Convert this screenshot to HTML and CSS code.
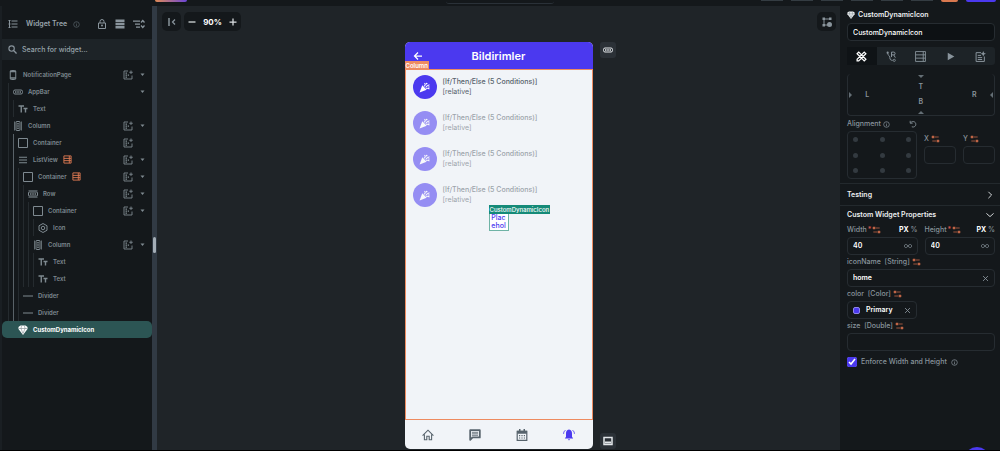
FILE: index.html
```
<!DOCTYPE html>
<html lang="en">
<head>
    <meta charset="UTF-8">
    <title>Widget Tree</title>
    <link rel="stylesheet" href="styles.css">
</head>
<body>
<svg class="sprite" aria-hidden="true">
    <symbol id="tree" viewBox="0 0 20 20"><path d="M7 4h12M7 10h12M7 16h12M3 2v16M1 4l2-2 2 2M1 10h4M1 17h4" fill="none" stroke="currentColor" stroke-width="2"/></symbol>
    <symbol id="info" viewBox="0 0 20 20"><circle cx="10" cy="10" r="8" fill="none" stroke="currentColor" stroke-width="2"/><path d="M10 9v6M10 5v2" stroke="currentColor" stroke-width="2"/></symbol>
    <symbol id="lock" viewBox="0 0 20 20"><path d="M3 8h14v11H3zM6 8V5a4 4 0 0 1 8 0v3" fill="none" stroke="currentColor" stroke-width="2"/><circle cx="10" cy="13" r="2" fill="currentColor"/></symbol>
    <symbol id="rows" viewBox="0 0 20 20"><path d="M1 1h18v5H1zM1 7.500h18v5H1zM1 14h18v5H1z" fill="currentColor"/></symbol>
    <symbol id="collapse" viewBox="0 0 24 20"><path d="M0 4h14M4 10h10M6 16h8" stroke="currentColor" stroke-width="2.500"/><path d="M16 7l3.500-4L23 7M16 13l3.500 4 3.500-4" fill="none" stroke="currentColor" stroke-width="2.500"/></symbol>
    <symbol id="search" viewBox="0 0 20 20"><path d="M13 13l6 6" stroke="currentColor" stroke-width="3"/><circle cx="8" cy="8" r="6" fill="none" stroke="currentColor" stroke-width="2.500"/></symbol>
    <symbol id="phone" viewBox="0 0 20 20"><rect x="4.500" y="1" width="11" height="18" rx="2" fill="none" stroke="currentColor" stroke-width="2"/><path d="M4 3h12M4 16h12" stroke="currentColor" stroke-width="3"/></symbol>
    <symbol id="bar" viewBox="0 0 20 20"><rect x="1" y="6" width="18" height="8" rx="3" fill="none" stroke="currentColor" stroke-width="2"/><path d="M4 8.500h3v3H4zM8.500 8.500h3v3h-3zM13 8.500h3v3h-3z" fill="currentColor"/></symbol>
    <symbol id="text" viewBox="0 0 20 20"><path d="M1 4h11M6.500 4v13M11 9h8M15 9v8" fill="none" stroke="currentColor" stroke-width="2.800"/></symbol>
    <symbol id="column" viewBox="0 0 20 20"><path d="M3 1v18M17 1v18" stroke="currentColor" stroke-width="1.500"/><rect x="6" y="1" width="8" height="18" rx="1" fill="none" stroke="currentColor" stroke-width="2"/><path d="M8.500 4h3v3h-3zM8.500 8.500h3v3h-3zM8.500 13h3v3h-3z" fill="currentColor"/></symbol>
    <symbol id="row" viewBox="0 0 20 20"><path d="M1 3.500h18M1 16.500h18" stroke="currentColor" stroke-width="1.500"/><rect x="1" y="6" width="18" height="8" rx="1" fill="none" stroke="currentColor" stroke-width="2"/><path d="M4 8.500h3v3H4zM8.500 8.500h3v3h-3zM13 8.500h3v3h-3z" fill="currentColor"/></symbol>
    <symbol id="box" viewBox="0 0 20 20"><path d="M1 1h18v18H1z" fill="none" stroke="currentColor" stroke-width="2"/></symbol>
    <symbol id="list" viewBox="0 0 20 20"><path d="M2 4.500h16M2 10h16M2 15.500h16" stroke="currentColor" stroke-width="2.200"/></symbol>
    <symbol id="hex" viewBox="0 0 20 20"><path d="M10 1l8 4.500v9L10 19l-8-4.500v-9z" fill="none" stroke="currentColor" stroke-width="2"/><circle cx="10" cy="10" r="3.500" fill="none" stroke="currentColor" stroke-width="2"/></symbol>
    <symbol id="divider" viewBox="0 0 20 20"><path d="M0 10h20" stroke="currentColor" stroke-width="2"/></symbol>
    <symbol id="gem" viewBox="0 0 20 20"><path d="M5 1h10l4 3v4l-9 12L1 8V4z" fill="currentColor"/><path d="M2 7h16M7 2L6 7l4 10 4-10-1-5" fill="none" stroke="#66757a"/></symbol>
    <symbol id="query" viewBox="0 0 20 20"><path d="M2 2h16v16H2zM2 7.500h16M2 12.500h16M14 2v16" fill="none" stroke="currentColor" stroke-width="2"/></symbol>
    <symbol id="slot" viewBox="0 0 20 20"><path d="M10 2H2v16h16v-7" fill="none" stroke="currentColor" stroke-width="1.800"/><path d="M16 1v7M12.500 4.500h7" stroke="currentColor" stroke-width="1.800"/><path d="M5 5h3v2.500H5zM5 9h3v2.500H5zM5 13h3v2.500H5zM9.500 9H12v2.500H9.500z" fill="currentColor"/></symbol>
    <symbol id="caret" viewBox="0 0 10 10"><path d="M1 3h8L5 8z" fill="currentColor"/></symbol>
    <symbol id="hide" viewBox="0 0 20 20"><path d="M4 2v16" stroke="currentColor" stroke-width="3"/><path d="M16 5l-5 5 5 5" fill="none" stroke="currentColor" stroke-width="2.500"/></symbol>
    <symbol id="minus" viewBox="0 0 20 20"><path d="M3 10h14" stroke="currentColor" stroke-width="2.500"/></symbol>
    <symbol id="plus" viewBox="0 0 20 20"><path d="M3 10h14M10 3v14" stroke="currentColor" stroke-width="2.500"/></symbol>
    <symbol id="nodes" viewBox="0 0 20 20"><path d="M4 4h12M4 4v12h10" fill="none" stroke="currentColor" stroke-width="2"/><path d="M1 1h5v5H1zM14 1h5v5h-5zM1 14h5v5H1z" fill="currentColor"/><circle cx="15" cy="15" r="5" fill="currentColor"/></symbol>
    <symbol id="dock" viewBox="0 0 20 20"><path d="M2 3h16v14H2z" fill="none" stroke="currentColor" stroke-width="3"/><path d="M4 11h12v4H4z" fill="currentColor"/></symbol>
    <symbol id="back" viewBox="0 0 20 20"><path d="M18 10H3M10 3l-7 7 7 7" fill="none" stroke="currentColor" stroke-width="2.500"/></symbol>
    <symbol id="party" viewBox="0 0 20 20"><path d="M1 19L6 6l8 8z" fill="currentColor"/><path d="M9 8c3-2 3-4 1-6M12 10c2-3 4-4 7-5M13 12c2-1 4-1 6 1" fill="none" stroke="currentColor" stroke-width="2"/><circle cx="14" cy="3" r="1.500" fill="currentColor"/><circle cx="18" cy="9" r="1.300" fill="currentColor"/></symbol>
    <symbol id="home" viewBox="0 0 20 20"><path d="M1 11l9-9 9 9M4 9v9h4v-6h4v6h4V9" fill="none" stroke="currentColor" stroke-width="1.800"/></symbol>
    <symbol id="chat" viewBox="0 0 20 20"><path d="M2 18V2h16v12H6z" fill="none" stroke="currentColor" stroke-width="3" stroke-linejoin="round"/><path d="M5 5.500h10M5 8h10M5 10.500h10" stroke="currentColor" stroke-width="1.400"/></symbol>
    <symbol id="calendar" viewBox="0 0 20 20"><path d="M2 4h16v15H2z" fill="none" stroke="currentColor" stroke-width="2"/><path d="M2 3h16v5H2zM5 0h2.500v4H5zM12.500 0H15v4h-2.500zM5 10h2v2H5zM9 10h2v2H9zM13 10h2v2h-2zM5 14h2v2H5zM9 14h2v2H9zM13 14h2v2h-2z" fill="currentColor"/></symbol>
    <symbol id="bell" viewBox="0 0 20 20"><path d="M10 1c4 1 5 3 5 7v5l2 3H3l2-3V8c0-4 1-6 5-7zM8 17h4l-2 2z" fill="currentColor"/><path d="M4 2C2 4 1 5 1 8M16 2c2 2 3 3 3 6" fill="none" stroke="currentColor" stroke-width="1.500"/></symbol>
    <symbol id="design" viewBox="0 0 20 20"><path d="M2 5l3-3 13 13-3 3zM15 2l3 3L5 18H2v-3z" fill="none" stroke="currentColor" stroke-width="2.200"/></symbol>
    <symbol id="action" viewBox="0 0 20 20"><circle cx="3" cy="3" r="2" fill="currentColor"/><circle cx="15" cy="17" r="2" fill="none" stroke="currentColor" stroke-width="1.500"/><path d="M3 4c0 5 4 3 4 8 0 4 2 5 5 5M10 11V2h4a2.500 2.500 0 0 1 0 5h-4M14 7l3 5" fill="none" stroke="currentColor" stroke-width="1.800"/></symbol>
    <symbol id="server" viewBox="0 0 20 20"><path d="M1 1h18v18H1zM1 7h18M1 13h18M15 1v18" fill="none" stroke="currentColor" stroke-width="1.600"/></symbol>
    <symbol id="play" viewBox="0 0 20 20"><path d="M5 3l12 7-12 7z" fill="currentColor"/></symbol>
    <symbol id="note" viewBox="0 0 20 20"><path d="M11 3H2v16h15v-9M5 8h6M5 12h8M5 15.500h8" fill="none" stroke="currentColor" stroke-width="1.800"/><path d="M15 0l1.500 3.500L20 5l-3.500 1.500L15 10l-1.500-3.500L10 5l3.500-1.500z" fill="currentColor"/></symbol>
    <symbol id="undo" viewBox="0 0 20 20"><path d="M3 2v6h6M4 7c4-5 13-4 13 4 0 5-5 8-10 6" fill="none" stroke="currentColor" stroke-width="2.200"/></symbol>
    <symbol id="bind" viewBox="0 0 22 20"><path d="M1 5h5M9 5h10M3 15h10M17 15h4" stroke="currentColor" stroke-width="2"/><path d="M2 2h6v6H2zM14 12h6v6h-6z" fill="currentColor"/></symbol>
    <symbol id="right" viewBox="0 0 20 20"><path d="M6 2l8 8-8 8" fill="none" stroke="currentColor" stroke-width="2.200"/></symbol>
    <symbol id="down" viewBox="0 0 20 20"><path d="M1 6l9 8 9-8" fill="none" stroke="currentColor" stroke-width="2.200"/></symbol>
    <symbol id="inf" viewBox="0 0 20 20"><path d="M10 10C7 5 1 5 1 10s6 5 9 0 9-5 9 0-6 5-9 0z" fill="none" stroke="currentColor" stroke-width="2"/></symbol>
    <symbol id="close" viewBox="0 0 20 20"><path d="M3 3l14 14M17 3L3 17" stroke="currentColor" stroke-width="2.500"/></symbol>
</svg>

<div class="app">
    <header class="topbar">
        <span class="brand"></span>
        <span class="command"></span>
        <span class="tools"><i></i><i></i><i></i><i></i><i></i><i></i><i class="orange"></i><i class="purple"></i></span>
    </header>

    <div class="workspace">
        <aside class="sidebar">
            <div class="side-head">
                <svg class="icon"><use href="#tree"/></svg>
                <h1>Widget Tree</h1>
                <svg class="icon small"><use href="#info"/></svg>
                <button class="push" aria-label="Lock"><svg class="icon"><use href="#lock"/></svg></button>
                <button aria-label="Rows"><svg class="icon"><use href="#rows"/></svg></button>
                <button aria-label="Collapse"><svg class="icon wide"><use href="#collapse"/></svg></button>
            </div>
            <label class="search">
                <svg class="icon"><use href="#search"/></svg>
                <input type="text" placeholder="Search for widget..." aria-label="Search for widget">
            </label>
            <ul class="tree">
                <li>
                    <div class="node"><svg class="icon"><use href="#phone"/></svg>NotificationPage<svg class="icon slot"><use href="#slot"/></svg><svg class="caret"><use href="#caret"/></svg></div>
                    <ul>
                        <li>
                            <div class="node"><svg class="icon"><use href="#bar"/></svg>AppBar<svg class="caret push"><use href="#caret"/></svg></div>
                            <ul>
                                <li><div class="node"><svg class="icon"><use href="#text"/></svg>Text</div></li>
                            </ul>
                        </li>
                        <li>
                            <div class="node"><svg class="icon"><use href="#column"/></svg>Column<svg class="icon slot"><use href="#slot"/></svg><svg class="caret"><use href="#caret"/></svg></div>
                            <ul class="active">
                                <li><div class="node"><svg class="icon"><use href="#box"/></svg>Container<svg class="icon slot"><use href="#slot"/></svg><span class="caret"></span></div></li>
                                <li>
                                    <div class="node"><svg class="icon"><use href="#list"/></svg>ListView<svg class="icon query"><use href="#query"/></svg><svg class="icon slot"><use href="#slot"/></svg><svg class="caret"><use href="#caret"/></svg></div>
                                    <ul>
                                        <li>
                                            <div class="node"><svg class="icon"><use href="#box"/></svg>Container<svg class="icon query"><use href="#query"/></svg><svg class="icon slot"><use href="#slot"/></svg><svg class="caret"><use href="#caret"/></svg></div>
                                            <ul>
                                                <li>
                                                    <div class="node"><svg class="icon"><use href="#row"/></svg>Row<svg class="icon slot"><use href="#slot"/></svg><svg class="caret"><use href="#caret"/></svg></div>
                                                    <ul>
                                                        <li>
                                                            <div class="node"><svg class="icon"><use href="#box"/></svg>Container<svg class="icon slot"><use href="#slot"/></svg><svg class="caret"><use href="#caret"/></svg></div>
                                                            <ul>
                                                                <li><div class="node"><svg class="icon"><use href="#hex"/></svg>Icon</div></li>
                                                            </ul>
                                                        </li>
                                                        <li>
                                                            <div class="node"><svg class="icon"><use href="#column"/></svg>Column<svg class="icon slot"><use href="#slot"/></svg><svg class="caret"><use href="#caret"/></svg></div>
                                                            <ul>
                                                                <li><div class="node"><svg class="icon"><use href="#text"/></svg>Text</div></li>
                                                                <li><div class="node"><svg class="icon"><use href="#text"/></svg>Text</div></li>
                                                            </ul>
                                                        </li>
                                                    </ul>
                                                </li>
                                            </ul>
                                        </li>
                                        <li><div class="node"><svg class="icon"><use href="#divider"/></svg>Divider</div></li>
                                        <li><div class="node"><svg class="icon"><use href="#divider"/></svg>Divider</div></li>
                                    </ul>
                                </li>
                                <li><div class="node selected"><svg class="icon"><use href="#gem"/></svg>CustomDynamicIcon</div></li>
                            </ul>
                        </li>
                    </ul>
                </li>
            </ul>
        </aside>
        <div class="scrollbar"><span></span></div>

        <main class="canvas">
            <div class="toolbar">
                <button class="tool" aria-label="Hide panel"><svg class="icon"><use href="#hide"/></svg></button>
                <div class="zoom">
                    <button aria-label="Zoom out"><svg class="icon"><use href="#minus"/></svg></button>
                    <span>90%</span>
                    <button aria-label="Zoom in"><svg class="icon"><use href="#plus"/></svg></button>
                </div>
                <button class="tool push" aria-label="Flow"><svg class="icon"><use href="#nodes"/></svg></button>
            </div>
            <div class="stage">
                <div class="phone">
                    <div class="appbar">
                        <svg class="icon"><use href="#back"/></svg>
                        <h2>Bildirimler</h2>
                    </div>
                    <div class="screen">
                        <span class="tag">Column</span>
                        <ul class="notes">
                            <li><span class="dot"><svg class="icon"><use href="#party"/></svg></span><p>[If/Then/Else (5 Conditions)]<small>[relative]</small></p></li>
                            <li><span class="dot"><svg class="icon"><use href="#party"/></svg></span><p>[If/Then/Else (5 Conditions)]<small>[relative]</small></p></li>
                            <li><span class="dot"><svg class="icon"><use href="#party"/></svg></span><p>[If/Then/Else (5 Conditions)]<small>[relative]</small></p></li>
                            <li><span class="dot"><svg class="icon"><use href="#party"/></svg></span><p>[If/Then/Else (5 Conditions)]<small>[relative]</small></p></li>
                        </ul>
                        <div class="custom"><span class="tag green">CustomDynamicIcon</span>Plac<br>ehol</div>
                    </div>
                    <nav class="tabbar">
                        <a href="#" aria-label="Home"><svg class="icon"><use href="#home"/></svg></a>
                        <a href="#" aria-label="Messages"><svg class="icon"><use href="#chat"/></svg></a>
                        <a href="#" aria-label="Calendar"><svg class="icon"><use href="#calendar"/></svg></a>
                        <a href="#" aria-label="Notifications" class="on"><svg class="icon"><use href="#bell"/></svg></a>
                    </nav>
                </div>
                <div class="stage-side">
                    <button aria-label="App bar"><svg class="icon"><use href="#bar"/></svg></button>
                    <button aria-label="Nav bar"><svg class="icon"><use href="#dock"/></svg></button>
                </div>
            </div>
        </main>

        <aside class="panel">
            <div class="panel-head"><svg class="icon small"><use href="#gem"/></svg>CustomDynamicIcon</div>
            <input class="field name" type="text" value="CustomDynamicIcon" aria-label="Widget name">
            <div class="tabs">
                <button class="on" aria-label="Properties"><svg class="icon"><use href="#design"/></svg></button>
                <button aria-label="Actions"><svg class="icon"><use href="#action"/></svg></button>
                <button aria-label="Backend query"><svg class="icon"><use href="#server"/></svg></button>
                <button aria-label="Animations"><svg class="icon"><use href="#play"/></svg></button>
                <button aria-label="Documentation"><svg class="icon"><use href="#note"/></svg></button>
            </div>
            <div class="spacing">
                <i class="edge left"></i><span>L</span>
                <div class="middle"><i class="edge top"></i><span>T</span><span>B</span><i class="edge bottom"></i></div>
                <span>R</span><i class="edge right"></i>
            </div>
            <div class="align">
                <div class="align-left">
                    <div class="label">Alignment<svg class="icon tiny"><use href="#info"/></svg><svg class="icon small push"><use href="#undo"/></svg></div>
                    <div class="points"><i></i><i></i><i></i><i></i><i></i><i></i><i></i><i></i><i></i></div>
                </div>
                <div class="axis">
                    <label class="label" for="x">X<svg class="bind"><use href="#bind"/></svg></label>
                    <input class="field" id="x" type="text">
                </div>
                <div class="axis">
                    <label class="label" for="y">Y<svg class="bind"><use href="#bind"/></svg></label>
                    <input class="field" id="y" type="text">
                </div>
            </div>
            <button class="section">Testing<svg class="icon small"><use href="#right"/></svg></button>
            <button class="section open">Custom Widget Properties<svg class="icon small"><use href="#down"/></svg></button>
            <div class="pair">
                <div>
                    <label class="label" for="width">Width <em>*</em><svg class="bind"><use href="#bind"/></svg><span class="unit"><b>PX</b> %</span></label>
                    <div class="field"><input id="width" type="text" value="40"><svg class="icon small"><use href="#inf"/></svg></div>
                </div>
                <div>
                    <label class="label" for="height">Height <em>*</em><svg class="bind"><use href="#bind"/></svg><span class="unit"><b>PX</b> %</span></label>
                    <div class="field"><input id="height" type="text" value="40"><svg class="icon small"><use href="#inf"/></svg></div>
                </div>
            </div>
            <label class="label" for="iconName">iconName &nbsp;[String]<svg class="bind"><use href="#bind"/></svg></label>
            <div class="field"><input id="iconName" type="text" value="home"><svg class="icon tiny"><use href="#close"/></svg></div>
            <div class="label">color &nbsp;[Color]<svg class="bind"><use href="#bind"/></svg></div>
            <button class="field color"><i></i>Primary<svg class="icon tiny push"><use href="#close"/></svg></button>
            <label class="label" for="size">size &nbsp;[Double]<svg class="bind"><use href="#bind"/></svg></label>
            <input class="field" id="size" type="text">
            <label class="check"><input type="checkbox" checked>Enforce Width and Height<svg class="icon tiny"><use href="#info"/></svg></label>
        </aside>
        <span class="fab"></span>
    </div>
</div>
</body>
</html>
```
FILE: styles.css
```
*{
    margin: 0;
    padding: 0;
    box-sizing: border-box;
    list-style: none;
}
body{
    display: flex;
    flex-direction: column;
    height: 100vh;
    padding-bottom: 22px;
    background: #fff;
    color: #89949c;
    font: 500 7px/10px "Inter", "Liberation Sans", sans-serif;
}
button, input{
    border: 0;
    background: none;
    color: inherit;
    font: inherit;
}
button{
    display: flex;
    align-items: center;
    justify-content: center;
}
input{
    min-width: 0;
    outline: 0;
}
svg{
    display: block;
    flex: none;
}
.sprite{
    position: absolute;
    width: 0;
    height: 0;
}
.icon{
    width: 10px;
    height: 10px;
}
.small{
    width: 8px;
    height: 8px;
}
.tiny{
    width: 7px;
    height: 7px;
}
.wide{
    width: 12px;
}
.push{
    margin-left: auto;
}
.app{
    display: flex;
    flex: 1;
    flex-direction: column;
    min-height: 0;
    border-bottom: 1px solid #000;
    background: #14181b;
}

/* top bar */
.topbar{
    display: grid;
    grid-template-columns: 1fr 108px 1fr;
    height: 6px;
    background: #14181b;
}
.brand{
    width: 32px;
    height: 2px;
    margin-left: 155px;
    border-radius: 0 0 3px 3px;
    background: linear-gradient(90deg, #e08a55, #6a45d8);
}
.command{
    height: 4px;
    border-bottom: 1px solid #2a3138;
    border-radius: 0 0 3px 3px;
}
.tools{
    display: flex;
    justify-content: flex-end;
    gap: 8px;
    padding-right: 4px;
}
.tools i{
    width: 22px;
    height: 1px;
    background: #343c42;
}
.tools .orange{
    width: 17px;
    height: 2px;
    border-radius: 0 0 3px 3px;
    background: #d9784f;
}
.tools .purple{
    width: 30px;
    height: 2px;
    border-radius: 0 0 3px 3px;
    background: #4b39ef;
}

.workspace{
    position: relative;
    display: flex;
    flex: 1;
    min-height: 0;
    overflow: hidden;
}

/* widget tree */
.sidebar{
    width: 152px;
    border-left: 2px solid #1a1f23;
}
.side-head{
    display: flex;
    align-items: center;
    gap: 8px;
    height: 33px;
    padding: 3px 7px 0 6px;
}
.side-head h1{
    font-size: 7px;
    font-weight: 600;
    color: #98a3ab;
}
.side-head .small{
    width: 7px;
    height: 7px;
    margin-left: -2px;
    color: #59636a;
}
.search{
    display: flex;
    align-items: center;
    gap: 5px;
    height: 21px;
    padding: 0 6px;
    background: #1d2327;
    font-size: 7px;
}
.search input{
    flex: 1;
}
.search input::placeholder{
    color: #98a3ab;
}
.search .icon{
    width: 9px;
    height: 9px;
}
.tree{
    padding: 6px 6px 0 2px;
    color: #7e8990;
    font-size: 6px;
    font-weight: 600;
}
.tree ul{
    margin-left: 4px;
    border-left: 1px solid #252b2f;
}
.tree .active{
    border-color: #596268;
}
.node{
    display: flex;
    align-items: center;
    gap: 5px;
    height: 17px;
    padding-left: 4px;
}
.slot{
    margin-left: auto;
}
.query{
    width: 9px;
    height: 9px;
    color: #e07b54;
}
.caret{
    width: 5px;
    height: 5px;
    margin: 0 1px 0 2px;
}
.caret.push{
    margin-left: auto;
}
.selected{
    margin: 0 -6px 0 -12px;
    padding-left: 16px;
    border-radius: 5px;
    background: #2c5554;
    color: #fff;
    font-weight: 700;
}
.scrollbar{
    display: flex;
    align-items: center;
    width: 5px;
    padding-top: 34px;
    background: #313a44;
}
.scrollbar span{
    width: 3px;
    height: 16px;
    margin: 0 auto;
    border-radius: 2px;
    background: #a3adb6;
}

/* canvas */
.canvas{
    display: flex;
    flex: 1;
    flex-direction: column;
    background: #1f2428;
}
.toolbar{
    display: flex;
    gap: 3px;
    padding: 6px 4px 0 5px;
}
.tool, .zoom{
    width: 19px;
    height: 19px;
    border-radius: 5px;
    background: #14181b;
}
.zoom{
    display: flex;
    align-items: center;
    justify-content: space-between;
    width: 57px;
    padding: 0 3px;
    color: #dce0e3;
}
.zoom span{
    color: #fff;
    font-size: 8px;
    font-weight: 700;
}
.stage{
    display: grid;
    flex: 1;
    grid-template-columns: 1fr 188px 1fr;
    column-gap: 7px;
    min-height: 0;
    padding: 11px 0 1px;
}
.phone{
    display: flex;
    flex-direction: column;
    grid-column: 2;
    border-radius: 5px;
    background: #f1f4f8;
}
.appbar{
    display: grid;
    grid-template-columns: 27px 1fr 27px;
    align-items: center;
    justify-items: center;
    height: 27px;
    border-radius: 5px 5px 0 0;
    background: #4b39ef;
    color: #fff;
}
.appbar h2{
    font-size: 11px;
    font-weight: 600;
}
.screen{
    position: relative;
    flex: 1;
    border: 1px solid #ee8b60;
}
.tag{
    position: absolute;
    left: -1px;
    bottom: 100%;
    padding: 0 1px;
    background: #ee8b60;
    color: #fff;
    font-size: 6px;
    font-weight: 600;
    line-height: 9px;
}
.green{
    background: #158a78;
    font-weight: 500;
}
.notes{
    margin-top: -1px;
}
.notes li{
    display: flex;
    align-items: center;
    gap: 6px;
    height: 36px;
    padding-left: 7px;
    color: #57636c;
}
.notes li + li{
    opacity: .55;
}
.notes small{
    display: block;
    font-size: 7px;
    font-weight: 400;
}
.dot{
    display: flex;
    align-items: center;
    justify-content: center;
    width: 24px;
    height: 24px;
    border-radius: 50%;
    background: #4b39ef;
    color: #fff;
}
.dot .icon{
    width: 11px;
    height: 11px;
}
.custom{
    position: relative;
    width: 20px;
    margin: 0 auto;
    border: 1px solid #6fb3a6;
    background: #fff;
    color: #4b39ef;
    font-size: 7px;
    line-height: 8px;
    text-align: center;
}
.tabbar{
    display: flex;
    height: 29px;
}
.tabbar a{
    display: flex;
    flex: 1;
    align-items: center;
    justify-content: center;
    color: #57636c;
}
.tabbar .on{
    color: #4b39ef;
}
.tabbar .icon{
    width: 12px;
    height: 12px;
}
.stage-side{
    display: flex;
    flex-direction: column;
    justify-content: space-between;
}
.stage-side button{
    width: 16px;
    height: 16px;
    border-radius: 3px;
    background: #2b3137;
    color: #e3e7ea;
}

/* properties */
.panel{
    width: 160px;
    padding: 0 5px 0 7px;
}
.panel-head{
    display: flex;
    align-items: center;
    gap: 3px;
    height: 17px;
    color: #eceff1;
    font-weight: 600;
}
.field{
    display: flex;
    align-items: center;
    width: 100%;
    height: 18px;
    padding: 0 5px;
    border: 1px solid #262c31;
    border-radius: 4px;
    color: #fff;
    font-weight: 600;
}
.field input{
    flex: 1;
}
.field svg{
    color: #89949c;
}
.name{
    background: #0d1114;
    font-weight: 500;
}
.tabs{
    display: flex;
    height: 18px;
    margin-top: 6px;
    border-radius: 3px;
    background: #1d2327;
}
.tabs button{
    flex: 1;
}
.tabs .on{
    background: #0f1316;
    color: #fff;
}
.tabs .icon{
    width: 11px;
    height: 11px;
}
.spacing{
    display: flex;
    align-items: center;
    justify-content: space-between;
    height: 42px;
    margin-top: 9px;
    padding: 0 1px;
    border: 1px solid #262c31;
    border-top: 0;
    border-radius: 4px;
    font-weight: 600;
}
.middle{
    display: flex;
    flex-direction: column;
    align-items: center;
    justify-content: space-between;
    width: 76px;
    height: 100%;
    padding: 1px 0;
}
.edge{
    border: 3px solid transparent;
}
.edge.left{
    border-left-color: #646e75;
    border-right: 0;
}
.edge.right{
    border-right-color: #646e75;
    border-left: 0;
}
.edge.top{
    border-top-color: #646e75;
    border-bottom: 0;
}
.edge.bottom{
    border-bottom-color: #646e75;
    border-top: 0;
}
.label{
    display: flex;
    align-items: center;
    gap: 2px;
    height: 14px;
    white-space: nowrap;
}
.label em{
    color: #e0564f;
    font-style: normal;
}
.bind{
    width: 9px;
    height: 8px;
    color: #c06546;
}
.unit{
    margin-left: auto;
}
.unit b{
    color: #fff;
}
.align{
    display: flex;
    align-items: flex-start;
    gap: 7px;
    margin-top: 1px;
}
.align-left{
    flex: none;
    width: 70px;
}
.points{
    display: grid;
    grid-template-columns: repeat(3, 5px);
    align-content: space-between;
    justify-content: space-between;
    height: 48px;
    padding: 5px;
    border: 1px solid #262c31;
    border-radius: 4px;
}
.points i{
    height: 5px;
    border-radius: 50%;
    background: #333a40;
}
.axis{
    flex: 1;
    padding-top: 15px;
}
.section{
    justify-content: space-between;
    width: calc(100% + 12px);
    height: 23px;
    margin: 4px -5px 0 -7px;
    padding: 0 6px 0 7px;
    border: solid #23292d;
    border-width: 1px 0;
    color: #eceff1;
    font-weight: 600;
}
.open{
    height: 17px;
    margin-top: 0;
    border: 0;
}
.pair{
    display: grid;
    grid-template-columns: repeat(2, minmax(0, 1fr));
    gap: 7px;
}
.pair .label{
    gap: 1px;
}
.color{
    justify-content: flex-start;
    gap: 6px;
    width: 70px;
}
.color i{
    width: 7px;
    height: 7px;
    border: 1px solid #8f86e8;
    border-radius: 2px;
    background: #4b39ef;
}
.check{
    display: flex;
    align-items: center;
    gap: 4px;
    height: 22px;
    white-space: nowrap;
}
.check input{
    width: 10px;
    height: 10px;
    accent-color: #4b39ef;
}
.fab{
    position: absolute;
    right: 10px;
    bottom: -23px;
    width: 26px;
    height: 26px;
    border-radius: 50%;
    background: #4b39ef;
}
```
